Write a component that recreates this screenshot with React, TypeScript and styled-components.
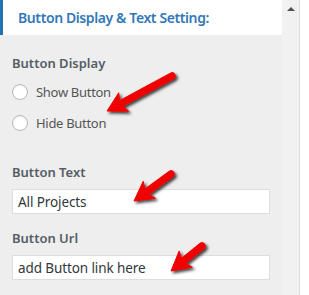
import React from "react";
import styled, { createGlobalStyle } from "styled-components";

const Global = createGlobalStyle`
  html, body { margin: 0; padding: 0; background: #ffffff; }
  body { font-family: "Noto Sans", "Open Sans", Arial, sans-serif; }
`;

const Page = styled.div`
  position: relative;
  width: 309px;
  height: 295px;
  display: flex;
  overflow: hidden;
`;

const Panel = styled.div`
  width: 282px;
  display: flex;
  flex-direction: column;
  background: #eeeeee;
`;

const Header = styled.div`
  height: 35px;
  box-sizing: border-box;
  background: #ffffff;
  border-left: 3px solid #2271b1;
  padding-left: 15px;
  display: flex;
  align-items: center;
  font-size: 14px;
  letter-spacing: -0.4px;
  font-weight: 600;
  color: #3278b8;
`;

const Body = styled.div`
  padding: 19px 12px 0 12px;
  display: flex;
  flex-direction: column;
`;

const Label = styled.div<{ $top: number }>`
  margin-top: ${(p) => p.$top}px;
  font-size: 13px;
  line-height: 18px;
  font-weight: 600;
  color: #555d66;
`;

const RadioRow = styled.label<{ $top: number }>`
  margin-top: ${(p) => p.$top}px;
  display: flex;
  align-items: center;
  gap: 8px;
  height: 16px;
  font-size: 13px;
  letter-spacing: -0.3px;
  color: #555555;
`;

const Radio = styled.span`
  width: 16px;
  height: 16px;
  box-sizing: border-box;
  border-radius: 50%;
  border: 1px solid #b4b9be;
  background: #ffffff;
  box-shadow: inset 0 1px 2px rgba(0, 0, 0, 0.07);
  flex: none;
`;

const Input = styled.div`
  margin-top: 8px;
  width: 258px;
  height: 25px;
  box-sizing: border-box;
  border: 1px solid #dddddd;
  background: #ffffff;
  padding-left: 5px;
  display: flex;
  align-items: center;
  font-size: 13.5px;
  letter-spacing: -0.1px;
  color: #32373c;
`;

const Scrollbar = styled.div`
  width: 17px;
  background: #f1f1f1;
  border-right: 1px solid #dcdcdc;
  display: flex;
  justify-content: center;
  padding-top: 7px;
  box-sizing: content-box;
`;

const UpArrow = styled.div`
  width: 0;
  height: 0;
  border-left: 4px solid transparent;
  border-right: 4px solid transparent;
  border-bottom: 4px solid #505050;
`;

const Overlay = styled.svg`
  position: absolute;
  left: 0;
  top: 0;
  pointer-events: none;
`;

function arrow(tx: number, ty: number, px: number, py: number, shaft = 7.5, headW = 21, headL = 19) {
  const len = Math.hypot(px - tx, py - ty);
  const dx = (px - tx) / len;
  const dy = (py - ty) / len;
  const nx = -dy;
  const ny = dx;
  const bx = px - dx * headL;
  const by = py - dy * headL;
  const cx = px - dx * headL * 0.78;
  const cy = py - dy * headL * 0.78;
  return {
    line: { x1: tx, y1: ty, x2: cx, y2: cy, w: shaft },
    head: `${px},${py} ${bx + (nx * headW) / 2},${by + (ny * headW) / 2} ${cx},${cy} ${bx - (nx * headW) / 2},${by - (ny * headW) / 2}`,
  };
}

const arrows = [
  arrow(172, 76, 107, 111),
  arrow(171, 174, 134, 201),
  arrow(202, 246, 171, 271),
];

export default function App() {
  return (
    <>
      <Global />
      <Page>
        <Panel>
          <Header>Button Display &amp; Text Setting:</Header>
          <Body>
            <Label $top={0}>Button Display</Label>
            <RadioRow $top={12}>
              <Radio />
              Show Button
            </RadioRow>
            <RadioRow $top={15}>
              <Radio />
              Hide Button
            </RadioRow>
            <Label $top={32}>Button Text</Label>
            <Input>All Projects</Input>
            <Label $top={15}>Button Url</Label>
            <Input>add Button link here</Input>
          </Body>
        </Panel>
        <Scrollbar>
          <UpArrow />
        </Scrollbar>
        <Overlay width="309" height="295" viewBox="0 0 309 295">
          <defs>
            <filter id="sh" x="-30%" y="-30%" width="160%" height="160%">
              <feDropShadow dx="2" dy="2" stdDeviation="1.4" floodColor="#000" floodOpacity="0.75" />
            </filter>
          </defs>
          {arrows.map((a, i) => (
            <g key={i} filter="url(#sh)" fill="#f00000" stroke="#f00000">
              <line
                x1={a.line.x1}
                y1={a.line.y1}
                x2={a.line.x2}
                y2={a.line.y2}
                strokeWidth={a.line.w}
                strokeLinecap="round"
              />
              <polygon points={a.head} strokeWidth={1} strokeLinejoin="round" />
            </g>
          ))}
        </Overlay>
      </Page>
    </>
  );
}
